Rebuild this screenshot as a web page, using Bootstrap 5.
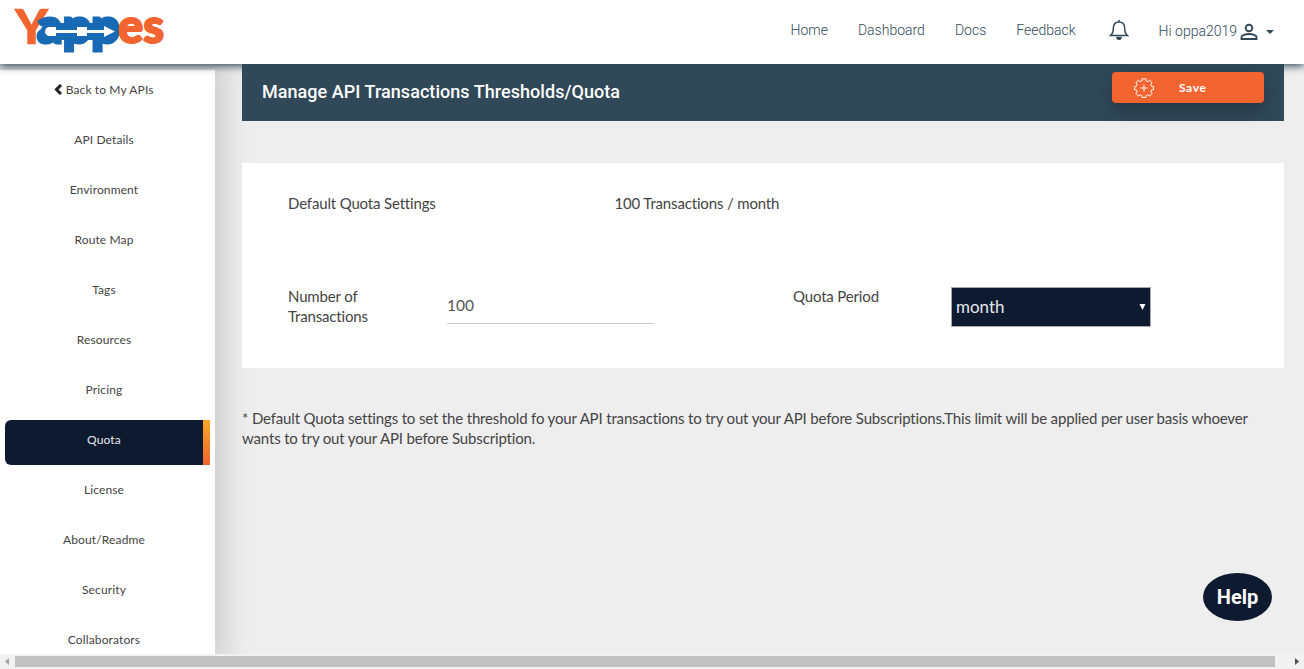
<!DOCTYPE html>
<html lang="en">
<head>
<meta charset="utf-8">
<meta name="viewport" content="width=device-width, initial-scale=1">
<title>Yappes - Quota</title>
<link href="https://cdn.jsdelivr.net/npm/bootstrap@5.3.0/dist/css/bootstrap.min.css" rel="stylesheet">
<style>
  body { background: #eee; color: #444; font-family: Lato, sans-serif; font-size: 15px; line-height: 20px; letter-spacing: -.16px; }
  .topbar { height: 64px; background: #fff; box-shadow: 0 2px 8px #304857; z-index: 1; padding: 0 30px 0 15px; }
  .brand-logo { overflow: visible; }
  .topbar .nav-link { font: 300 14px/20px Roboto, sans-serif; letter-spacing: 0; color: #304857; padding: 0; margin: 20px 30px 0 0; white-space: nowrap; }
  .topbar .user-link { margin: 21px 3px 0 0; }
  .bell { margin: 16px 30px 0 3px; }
  .user-icon { margin-top: 23px; }
  .caret { margin: 30px 0 0 8px; border: 4px solid transparent; border-top-color: #304857; border-bottom: 0; }
  .work { height: 590px; overflow: hidden; }
  .side { width: 215px; margin-top: 6px; padding: 0 5px; background: #fff; box-shadow: 0 0 24px 12px rgba(0,0,0,.125); }
  .side .nav-link { flex: 0 0 45px; margin-bottom: 5px; padding: 10px 0 0; border-right: 7px solid transparent; color: #444; font-size: 12px; line-height: 20px; text-align: center; letter-spacing: .13px; }
  .side .nav-link.active { color: #e4e6ea; background: linear-gradient(#f9a825, #f26430) right / 7px 100% no-repeat border-box, #0e1a30; border-radius: 6px 0 0 6px; }
  .content-area { z-index: 2; margin: 0 20px 0 27px; }
  .titlebar { height: 57px; background: #304857; padding: 0 20px; }
  .titlebar h1 { font: 500 18px/22px Roboto, sans-serif; letter-spacing: .045px; color: #fff; margin: 17px 0 0; }
  .btn-save { width: 152px; height: 31px; margin-top: 8px; padding: 0 0 0 22px; border: 0; border-radius: 4px; background: #f26430; color: #fff; font-size: 12px; font-weight: 700; letter-spacing: .6px; box-shadow: 0 8px 16px rgba(0,0,0,.22); }
  .btn-save span { margin-left: 25px; }
  .panel { height: 205px; margin-top: 42px; padding: 30px 46px; background: #fff; }
  .first-label { width: 326.500px; }
  .fields { margin-top: 74px; }
  .field-label { width: 158px; margin-top: -1px; }
  .amount { width: 207px; height: 37px; margin-left: 1px; padding: 0 0 1px; border: 0; border-bottom: 1px solid #ccc; border-radius: 0; background: none; color: #555; font-size: 15.500px; }
  .period-group { margin-left: 139px; }
  .period { width: 200px; height: 40px; padding: 0 4px 2px; appearance: none; border: 1px solid #a9a9a9; border-radius: 0; background: #0e1a30; color: #e6e8eb; font: 17px Lato, sans-serif; }
  .period-arrow { right: 5px; top: 17px; }
  .footnote { margin-top: 40px; white-space: nowrap; }
  .help { width: 69px; height: 48px; right: 32px; top: 573px; z-index: 3; border-radius: 50%; background: #0e1a30; color: #fff; font: 700 20px/48px Roboto, sans-serif; letter-spacing: 0; }
  .scroll-track { height: 15px; background: #f1f1f1; }
  .scroll-thumb { width: 1260px; height: 11px; background: #c1c1c1; }
</style>
<script src="https://cdn.jsdelivr.net/npm/bootstrap@5.3.0/dist/js/bootstrap.bundle.min.js"></script>
</head>
<body class="overflow-hidden">
<header class="topbar d-flex justify-content-between position-relative">
  <svg class="brand-logo" width="170" height="60" role="img" aria-label="Yappes">
    <rect x="26" y="23" width="76" height="17" rx="8" fill="#186ab4"/>
    <g font-family="Lato, sans-serif" font-weight="900" font-size="48" letter-spacing="0">
      <text x="0" y="43.500" fill="#f26430" stroke="#f26430" stroke-width=".6" textLength="33" lengthAdjust="spacingAndGlyphs">Y</text>
      <text x="22" y="43" fill="#186ab4" stroke="#186ab4" stroke-width="3" textLength="83" lengthAdjust="spacingAndGlyphs">app</text>
      <text x="103" y="43" fill="#f26430" stroke="#f26430" stroke-width="2" textLength="46" lengthAdjust="spacingAndGlyphs">es</text>
    </g>
    <path d="M33 27h8v3h21v-3h10v3h17v-4l11 5.500L89 37v-4H72v3H62v-3H41v3h-8c-4-2-4-7 0-9z" fill="#fff"/>
  </svg>
  <nav class="d-flex">
    <a class="nav-link">Home</a>
    <a class="nav-link">Dashboard</a>
    <a class="nav-link">Docs</a>
    <a class="nav-link">Feedback</a>
    <svg class="bell flex-shrink-0" width="20" height="28" viewBox="0 0 20 28" fill="none" stroke="#304857" stroke-width="1.500"><path d="M10 4v2M10 6c-4 0-5.700 3-5.700 6.500 0 4-.8 5.500-2.800 7h17c-2-1.500-2.800-3-2.800-7C15.700 9 14 6 10 6z"/><path d="M8 21.500h4c0 2.200-4 2.200-4 0z" fill="#304857"/></svg>
    <a class="nav-link user-link">Hi oppa2019</a>
    <svg class="user-icon flex-shrink-0" width="18" height="18" fill="none" stroke="#304857" stroke-width="1.900"><circle cx="9" cy="5" r="3.300"/><path d="M1.500 16v-2c0-1.700 4-3 7.500-3s7.500 1.300 7.500 3v2z"/></svg>
    <i class="caret align-self-start"></i>
  </nav>
</header>

<div class="work d-flex">
  <nav class="side nav flex-column flex-nowrap flex-shrink-0">
    <a class="nav-link"><svg style="vertical-align:-1px" width="8" height="11" viewBox="0 0 8 11" fill="none" stroke="#222" stroke-width="3"><path d="M7 1L2.500 5.500 7 10"/></svg> Back to My APIs</a>
    <a class="nav-link">API Details</a>
    <a class="nav-link">Environment</a>
    <a class="nav-link">Route Map</a>
    <a class="nav-link">Tags</a>
    <a class="nav-link">Resources</a>
    <a class="nav-link">Pricing</a>
    <a class="nav-link active">Quota</a>
    <a class="nav-link">License</a>
    <a class="nav-link">About/Readme</a>
    <a class="nav-link">Security</a>
    <a class="nav-link">Collaborators</a>
  </nav>
  <main class="content-area flex-grow-1 position-relative">
    <div class="titlebar d-flex justify-content-between align-items-start">
      <h1>Manage API Transactions Thresholds/Quota</h1>
      <button class="btn btn-save d-flex align-items-center">
        <svg width="20" height="20" viewBox="0 0 20 20" fill="none" stroke="#fff" stroke-width="1"><path d="M8.300.7h3.400l.5 2.300 1.500.6 2-1.300 2.400 2.400-1.300 2 .6 1.500 2.100.5v3l-2.100.5-.6 1.500 1.300 2-2.400 2.400-2-1.300-1.500.6-.5 2.100H8.300l-.5-2.100-1.500-.6-2 1.300-2.400-2.400 1.300-2-.6-1.500L.6 11.700v-3l2-.5.6-1.500-1.300-2 2.400-2.400 2 1.300L7.800 3z"/><path d="M10 6.500v7M6.500 10h7"/></svg>
        <span>Save</span>
      </button>
    </div>
    <section class="panel">
      <div class="d-flex"><div class="first-label">Default Quota Settings</div><div>100 Transactions / month</div></div>
      <div class="fields d-flex align-items-start">
        <label class="field-label">Number of<br>Transactions</label>
        <input class="amount" value="100" aria-label="Number of Transactions">
        <div class="period-group d-flex align-items-start">
          <label class="field-label">Quota Period</label>
          <div class="position-relative">
            <select class="period d-block" aria-label="Quota Period"><option>month</option></select>
            <svg class="period-arrow position-absolute" width="7" height="6"><path d="M.5 0h6l-3 6z" fill="#fff"/></svg>
          </div>
        </div>
      </div>
    </section>
    <p class="footnote">* Default Quota settings to set the threshold fo your API transactions to try out your API before Subscriptions.This limit will be applied per user basis whoever<br>wants to try out your API before Subscription.</p>
  </main>
</div>
<div class="scroll-track d-flex align-items-center">
  <svg width="15" height="15"><path d="M9 4v7L5 7.500z" fill="#a3a3a3"/></svg>
  <div class="scroll-thumb"></div>
  <svg class="ms-auto" width="15" height="15"><path d="M6 4v7l4-3.500z" fill="#505050"/></svg>
</div>
<a class="help position-fixed text-center text-decoration-none">Help</a>
</body>
</html>
